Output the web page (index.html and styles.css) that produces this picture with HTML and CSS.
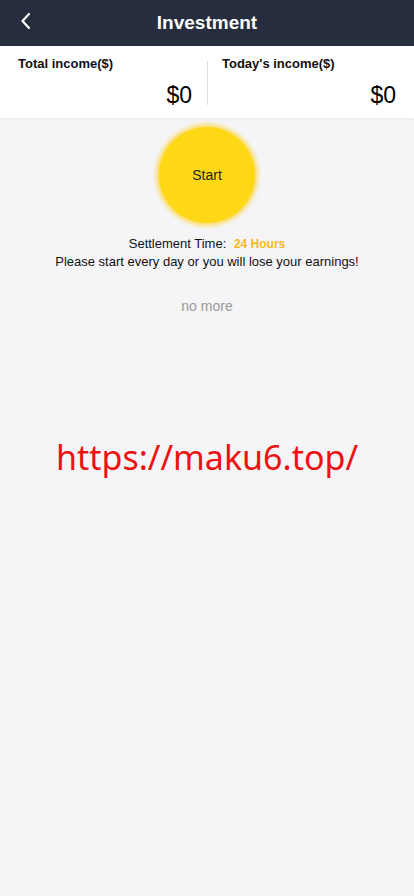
FILE: index.html
```html
<!DOCTYPE html>
<html>
<head>
<meta charset="utf-8">
<link rel="stylesheet" href="styles.css">
</head>
<body>
<header class="topbar">
  <span class="back"><svg width="14" height="20" viewBox="0 0 14 20"><path d="M10 3 L3.5 10 L10 17" fill="none" stroke="#fff" stroke-width="2.2" stroke-linecap="round" stroke-linejoin="round"/></svg></span>
  <h1 class="title">Investment</h1>
</header>
<section class="income">
  <div class="col">
    <div class="label">Total income($)</div>
    <div class="value">$0</div>
  </div>
  <div class="divider"></div>
  <div class="col">
    <div class="label">Today's income($)</div>
    <div class="value">$0</div>
  </div>
</section>
<main class="content">
  <div class="start">Start</div>
  <p class="settle">Settlement Time: <span class="hours">24 Hours</span></p>
  <p class="warn">Please start every day or you will lose your earnings!</p>
  <p class="nomore">no more</p>
  <p class="url">https://maku6.top/</p>
</main>
</body>
</html>
```
FILE: styles.css
```css
* { box-sizing: border-box; }
html, body { margin: 0; padding: 0; }
body {
  width: 414px;
  min-height: 896px;
  background: #f5f5f8;
  font-family: "Liberation Sans", Arial, sans-serif;
  color: #111;
}
.topbar {
  height: 46px;
  background: #252d3e;
  display: flex;
  align-items: center;
  justify-content: center;
  position: relative;
}
.back {
  position: absolute;
  left: 19px;
  top: 11px;
  display: flex;
}
.title {
  margin: 0;
  color: #fff;
  font-size: 19px;
  font-weight: bold;
}
.income {
  background: #fff;
  height: 72px;
  display: flex;
  align-items: stretch;
  box-shadow: 0 1px 3px rgba(0,0,0,0.06);
}
.col {
  flex: 1;
  display: flex;
  flex-direction: column;
  justify-content: space-between;
  padding: 10px 15px 10px 18px;
}
.col + .divider + .col { padding-left: 14px; padding-right: 18px; }
.divider {
  width: 1px;
  background: #ddd;
  margin: 15px 0 13px;
}
.label {
  font-size: 13px;
  font-weight: bold;
  color: #111;
}
.value {
  font-size: 23px;
  text-align: right;
  color: #000;
  line-height: 26px;
}
.content {
  display: flex;
  flex-direction: column;
  align-items: center;
}
.start {
  margin-top: 9px;
  width: 96px;
  height: 96px;
  border-radius: 50%;
  background: #fed815;
  box-shadow: 0 0 4px 3px rgba(254, 210, 40, 0.7);
  display: flex;
  align-items: center;
  justify-content: center;
  font-size: 14px;
  color: #222;
}
.settle {
  margin: 13px 0 0;
  font-size: 13px;
  line-height: 16px;
}
.hours {
  color: #f5b81c;
  font-weight: bold;
  font-size: 12px;
  margin-left: 4px;
}
.warn {
  margin: 2px 0 0;
  font-size: 13px;
  line-height: 16px;
}
.nomore {
  margin: 28px 0 0;
  font-size: 14px;
  color: #999;
  line-height: 16px;
}
.url {
  margin: 118px 0 0;
  font-family: "Noto Sans", "Open Sans", sans-serif;
  font-size: 34px;
  color: #ee1111;
  line-height: 50px;
}
```
